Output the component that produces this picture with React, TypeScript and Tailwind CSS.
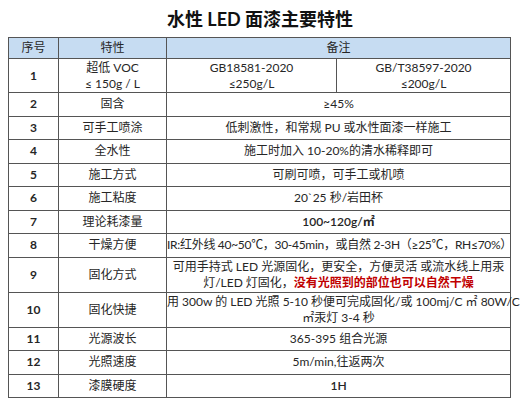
import React from "react";

const font = { fontFamily: "Lato, 'Noto Sans CJK SC', sans-serif" };

type Row = { no: string; name: React.ReactNode; note: React.ReactNode; tall?: boolean };

const rows: Row[] = [
  { no: "2", name: "固含", note: "≥45%" },
  { no: "3", name: "可手工喷涂", note: "低刺激性，和常规 PU 或水性面漆一样施工" },
  { no: "4", name: "全水性", note: "施工时加入 10-20%的清水稀释即可" },
  { no: "5", name: "施工方式", note: "可刷可喷，可手工或机喷" },
  { no: "6", name: "施工粘度", note: "20`25 秒/岩田杯" },
  { no: "7", name: "理论耗漆量", note: <span className="font-semibold">100~120g/㎡</span> },
  {
    no: "8",
    name: "干燥方便",
    note: <span className="tracking-[-0.3px]">IR:红外线 40~50℃，30-45min，或自然 2-3H（≥25℃，RH≤70%）</span>
  },
  {
    no: "9",
    name: "固化方式",
    tall: true,
    note: (
      <>
        可用手持式 LED 光源固化，更安全，方便灵活 或流水线上用汞
        <br />
        灯/LED 灯固化，<span className="font-bold text-[#c00000]">没有光照到的部位也可以自然干燥</span>
      </>
    )
  },
  {
    no: "10",
    name: "固化快捷",
    tall: true,
    note: (
      <>
        用 300w 的 LED 光照 5-10 秒便可完成固化/或 100mj/C ㎡ 80W/C
        <br />
        ㎡汞灯 3-4 秒
      </>
    )
  },
  { no: "11", name: "光源波长", note: "365-395 组合光源" },
  { no: "12", name: "光照速度", note: "5m/min,往返两次" },
  { no: "13", name: "漆膜硬度", note: <span className="font-semibold">1H</span> }
];

const cell = "border border-[#555] text-center align-middle p-0";

export default function App() {
  return (
    <div className="w-[520px] h-[404px] bg-white text-[#262626]" style={font}>
      <h1 className="pt-[6px] h-[37px] text-center text-[18px] font-bold leading-[26px] text-[#111]">
        水性 LED 面漆主要特性
      </h1>
      <table className="ml-[8px] w-[502px] table-fixed border-collapse text-[12px] leading-[16px]">
        <colgroup>
          <col className="w-[50px]" />
          <col className="w-[108px]" />
          <col className="w-[170px]" />
          <col className="w-[174px]" />
        </colgroup>
        <thead>
          <tr className="h-[21px] bg-[#c6dcf2]">
            <th className={`${cell} font-normal`}>序号</th>
            <th className={`${cell} font-normal`}>特性</th>
            <th className={`${cell} font-normal`} colSpan={2}>
              备注
            </th>
          </tr>
        </thead>
        <tbody>
          <tr className="h-[34px]">
            <td className={`${cell} font-bold`}>1</td>
            <td className={cell}>
              超低 VOC
              <br />≤ 150g / L
            </td>
            <td className={cell}>
              GB18581-2020
              <br />≤250g/L
            </td>
            <td className={cell}>
              GB/T38597-2020
              <br />≤200g/L
            </td>
          </tr>
          {rows.map((r) => (
            <tr key={r.no} className={r.tall ? "h-[35px]" : "h-[23.5px]"}>
              <td className={`${cell} font-bold`}>{r.no}</td>
              <td className={cell}>{r.name}</td>
              <td className={`${cell} whitespace-nowrap`} colSpan={2}>
                {r.note}
              </td>
            </tr>
          ))}
        </tbody>
      </table>
    </div>
  );
}
